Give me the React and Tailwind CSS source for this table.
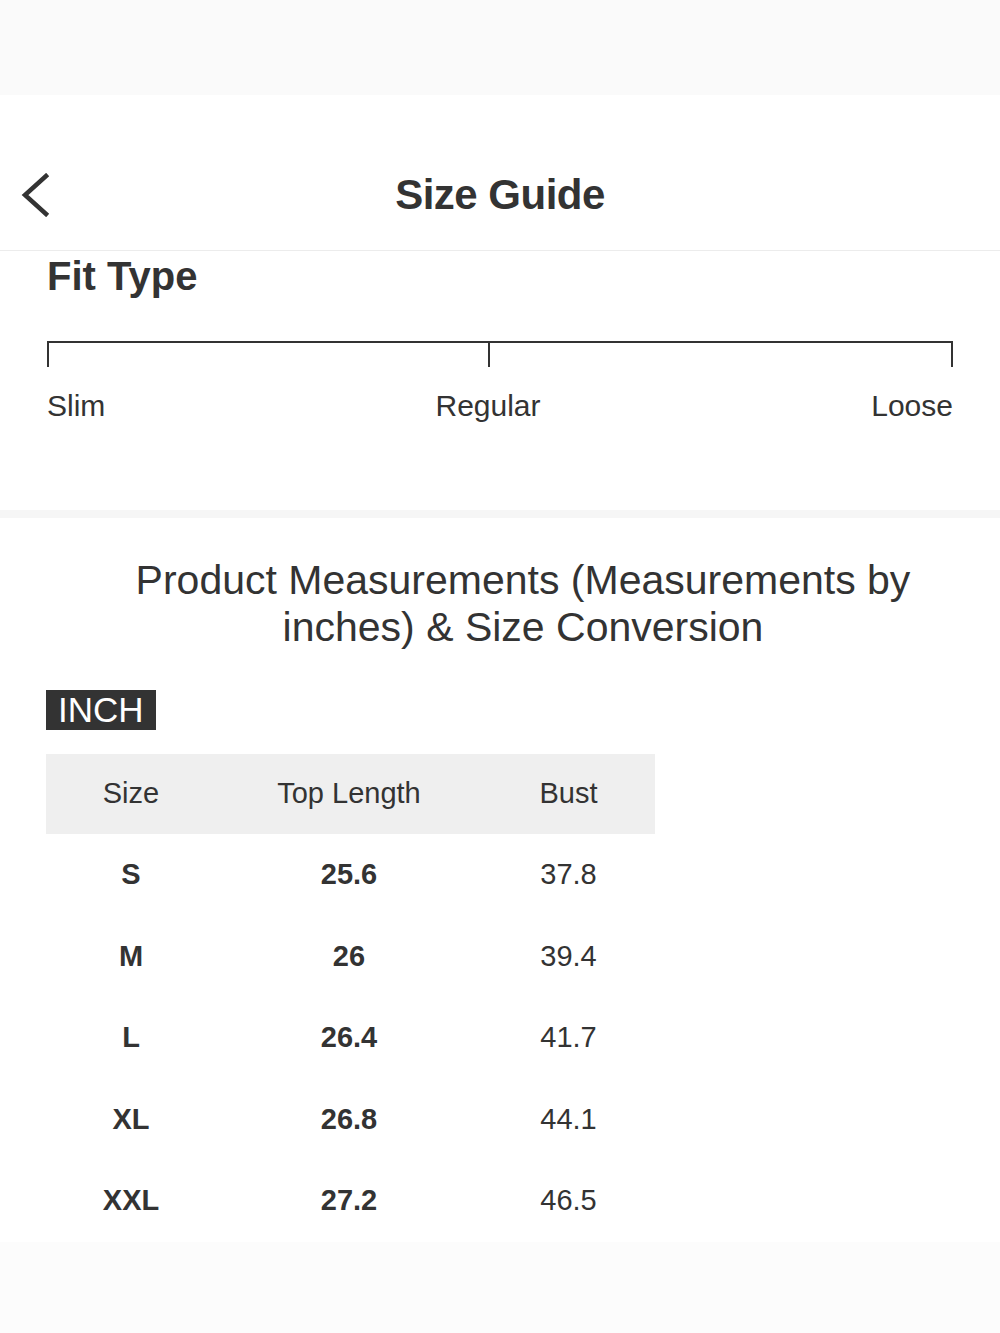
const rows = [
  { size: "S", length: "25.6", bust: "37.8" },
  { size: "M", length: "26", bust: "39.4" },
  { size: "L", length: "26.4", bust: "41.7" },
  { size: "XL", length: "26.8", bust: "44.1" },
  { size: "XXL", length: "27.2", bust: "46.5" },
];

export default function App() {
  return (
    <div
      className="w-[1000px] min-h-[1333px] bg-white text-[#333]"
      style={{ fontFamily: '"Liberation Sans", Arial, sans-serif' }}
    >
      {/* status area */}
      <div className="h-[95px] bg-[#fafafa]" />

      {/* header */}
      <div className="relative h-[156px] flex items-start justify-center border-b border-[#ececec]">
        <button className="absolute left-[20px] top-[78px] p-0">
          <svg width="30" height="44" viewBox="0 0 30 44" fill="none">
            <path d="M26 3 L5 22 L26 41" stroke="#333" strokeWidth="4.5" strokeLinecap="square" />
          </svg>
        </button>
        <h1 className="mt-[74px] text-[42px] leading-[52px] font-bold tracking-[-0.5px]">Size Guide</h1>
      </div>

      {/* fit type */}
      <div className="px-[47px] pt-[1px] pb-[86px]">
        <h2 className="text-[40px] font-bold leading-[48px]">Fit Type</h2>
        <div className="mt-[41px] h-[26px] border-t-2 border-x-2 border-[#333] relative">
          <div className="absolute left-[439px] top-0 h-full w-[2px] bg-[#333]" />
        </div>
        <div className="relative mt-[21px] h-[36px] text-[30px] leading-[36px]">
          <span className="absolute left-0">Slim</span>
          <span className="absolute left-[441px] -translate-x-1/2">Regular</span>
          <span className="absolute right-0">Loose</span>
        </div>
      </div>

      <div className="h-[8px] bg-[#f6f6f6]" />

      {/* measurements */}
      <div className="pl-[46px] pt-[39px]">
        <h3 className="max-w-[840px] mx-auto text-center text-[41px] leading-[47px]">
          Product Measurements (Measurements by inches) &amp; Size Conversion
        </h3>

        <div className="mt-[39px] inline-flex items-center h-[40px] bg-[#333] text-white text-[35px] px-[12px]">
          INCH
        </div>

        <div className="mt-[24px] w-[609px]">
          <div className="grid grid-cols-[170px_266px_173px] h-[80px] items-center bg-[#efefef] text-[29px]">
            <div className="text-center">Size</div>
            <div className="text-center">Top Length</div>
            <div className="text-center">Bust</div>
          </div>
          {rows.map((r) => (
            <div
              key={r.size}
              className="grid grid-cols-[170px_266px_173px] h-[81.5px] items-center text-[29px]"
            >
              <div className="text-center font-bold">{r.size}</div>
              <div className="text-center font-bold">{r.length}</div>
              <div className="text-center">{r.bust}</div>
            </div>
          ))}
        </div>
      </div>

      <div className="h-[96px] bg-[#fcfcfc]" />
    </div>
  );
}
